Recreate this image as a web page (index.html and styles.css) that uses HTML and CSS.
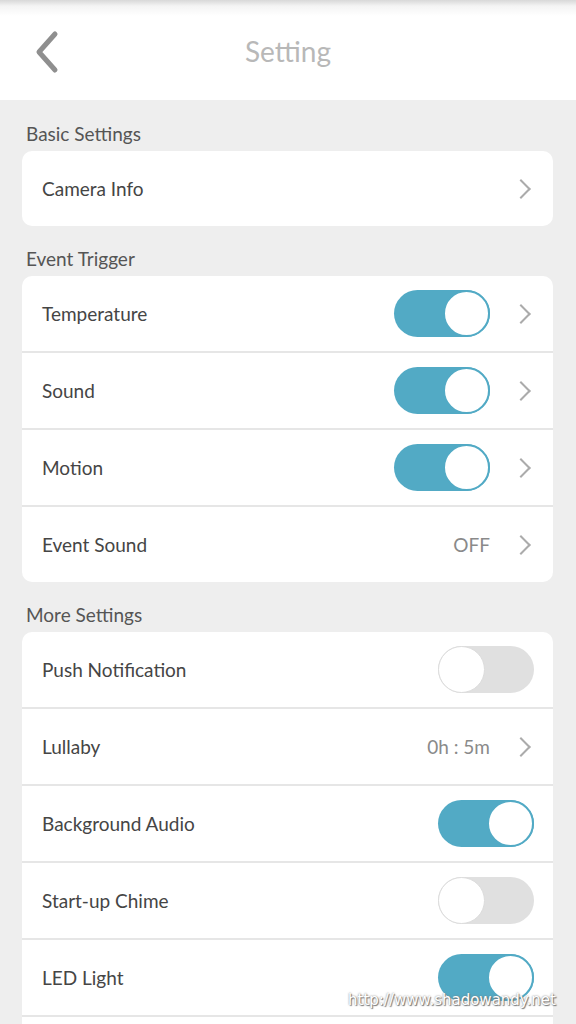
FILE: index.html
```html
<!DOCTYPE html>
<html lang="en">
<head>
  <meta charset="UTF-8" />
  <meta name="viewport" content="width=device-width, initial-scale=1.0" />
  <title>Setting</title>
  <link rel="stylesheet" href="styles.css">
</head>
<body>
  <div class="header">
    <button class="back" aria-label="Back">
      <svg width="30" height="44" viewBox="0 0 30 44"><path d="M22 4 L6 22 L22 40" fill="none" stroke="#8f8f8f" stroke-width="5" stroke-linecap="round" stroke-linejoin="round"/></svg>
    </button>
    <h1>Setting</h1>
  </div>

  <div class="content">
    <div class="group-title">Basic Settings</div>
    <div class="card">
      <div class="row">
        <span class="label">Camera Info</span>
        <span class="chev"></span>
      </div>
    </div>

    <div class="group-title">Event Trigger</div>
    <div class="card">
      <div class="row">
        <span class="label">Temperature</span>
        <span class="toggle on"><span class="knob"></span></span>
        <span class="chev"></span>
      </div>
      <div class="row">
        <span class="label">Sound</span>
        <span class="toggle on"><span class="knob"></span></span>
        <span class="chev"></span>
      </div>
      <div class="row">
        <span class="label">Motion</span>
        <span class="toggle on"><span class="knob"></span></span>
        <span class="chev"></span>
      </div>
      <div class="row">
        <span class="label">Event Sound</span>
        <span class="value">OFF</span>
        <span class="chev"></span>
      </div>
    </div>

    <div class="group-title">More Settings</div>
    <div class="card">
      <div class="row">
        <span class="label">Push Notification</span>
        <span class="toggle end"><span class="knob"></span></span>
      </div>
      <div class="row">
        <span class="label">Lullaby</span>
        <span class="value">0h : 5m</span>
        <span class="chev"></span>
      </div>
      <div class="row">
        <span class="label">Background Audio</span>
        <span class="toggle on end"><span class="knob"></span></span>
      </div>
      <div class="row">
        <span class="label">Start-up Chime</span>
        <span class="toggle end"><span class="knob"></span></span>
      </div>
      <div class="row">
        <span class="label">LED Light</span>
        <span class="toggle on end"><span class="knob"></span></span>
      </div>
      <div class="row"></div>
    </div>
  </div>

  <div class="watermark">http://www.shadowandy.net</div>
</body>
</html>
```

FILE: styles.css
```css
body {
  margin: 0;
  font-family: Lato, "Open Sans", sans-serif;
  background: #eeeeee;
  color: #4a4a4a;
  overflow: hidden;
  height: 1024px;
}
.header {
  position: relative;
  height: 100px;
  background: linear-gradient(#d8d8d8 0, #f4f4f4 6px, #fff 16px);
  display: flex;
  align-items: center;
  justify-content: center;
}
.header h1 {
  margin: 0;
  font-weight: 400;
  font-size: 28px;
  color: #b8b8b8;
  padding-top: 2px;
}
.back {
  position: absolute;
  left: 33px;
  top: 30px;
  border: 0;
  padding: 0;
  background: none;
}
.content {
  padding: 0 23px 0 22px;
}
.group-title {
  font-size: 19px;
  color: #555;
  padding: 21px 0 0 4px;
  height: 29px;
}
.group-title:first-child {
  padding-top: 22px;
}
.card {
  background: #fff;
  border-radius: 10px;
  overflow: hidden;
}
.row {
  display: flex;
  align-items: center;
  height: 75px;
  padding: 0 20px;
  border-top: 2px solid #e6e6e6;
}
.row:first-child {
  border-top: 0;
}
.label {
  flex: 1;
  font-size: 19px;
  color: #454545;
}
.value {
  font-size: 19px;
  color: #8a8a8a;
}
.chev {
  width: 12px;
  height: 12px;
  border-top: 2px solid #ababab;
  border-right: 2px solid #ababab;
  transform: rotate(45deg);
  margin: 0 5px 0 24px;
}
.toggle {
  width: 96px;
  height: 47px;
  border-radius: 24px;
  background: #e0e0e0;
  box-sizing: border-box;
  display: flex;
  align-items: center;
}
.toggle.end {
  margin-right: -1px;
}
.knob {
  width: 47px;
  height: 47px;
  border-radius: 50%;
  background: #fff;
  box-sizing: border-box;
  border: 1px solid #dcdcdc;
}
.toggle.on {
  background: #52aac5;
  justify-content: flex-end;
}
.toggle.on .knob {
  border: 2px solid #52aac5;
}
.watermark {
  position: absolute;
  left: 348px;
  top: 991px;
  font-family: "DejaVu Sans", sans-serif;
  font-size: 15px;
  color: #fff;
  text-shadow: 0 0 2px #777, 1px 1px 1px #777;
}
```
